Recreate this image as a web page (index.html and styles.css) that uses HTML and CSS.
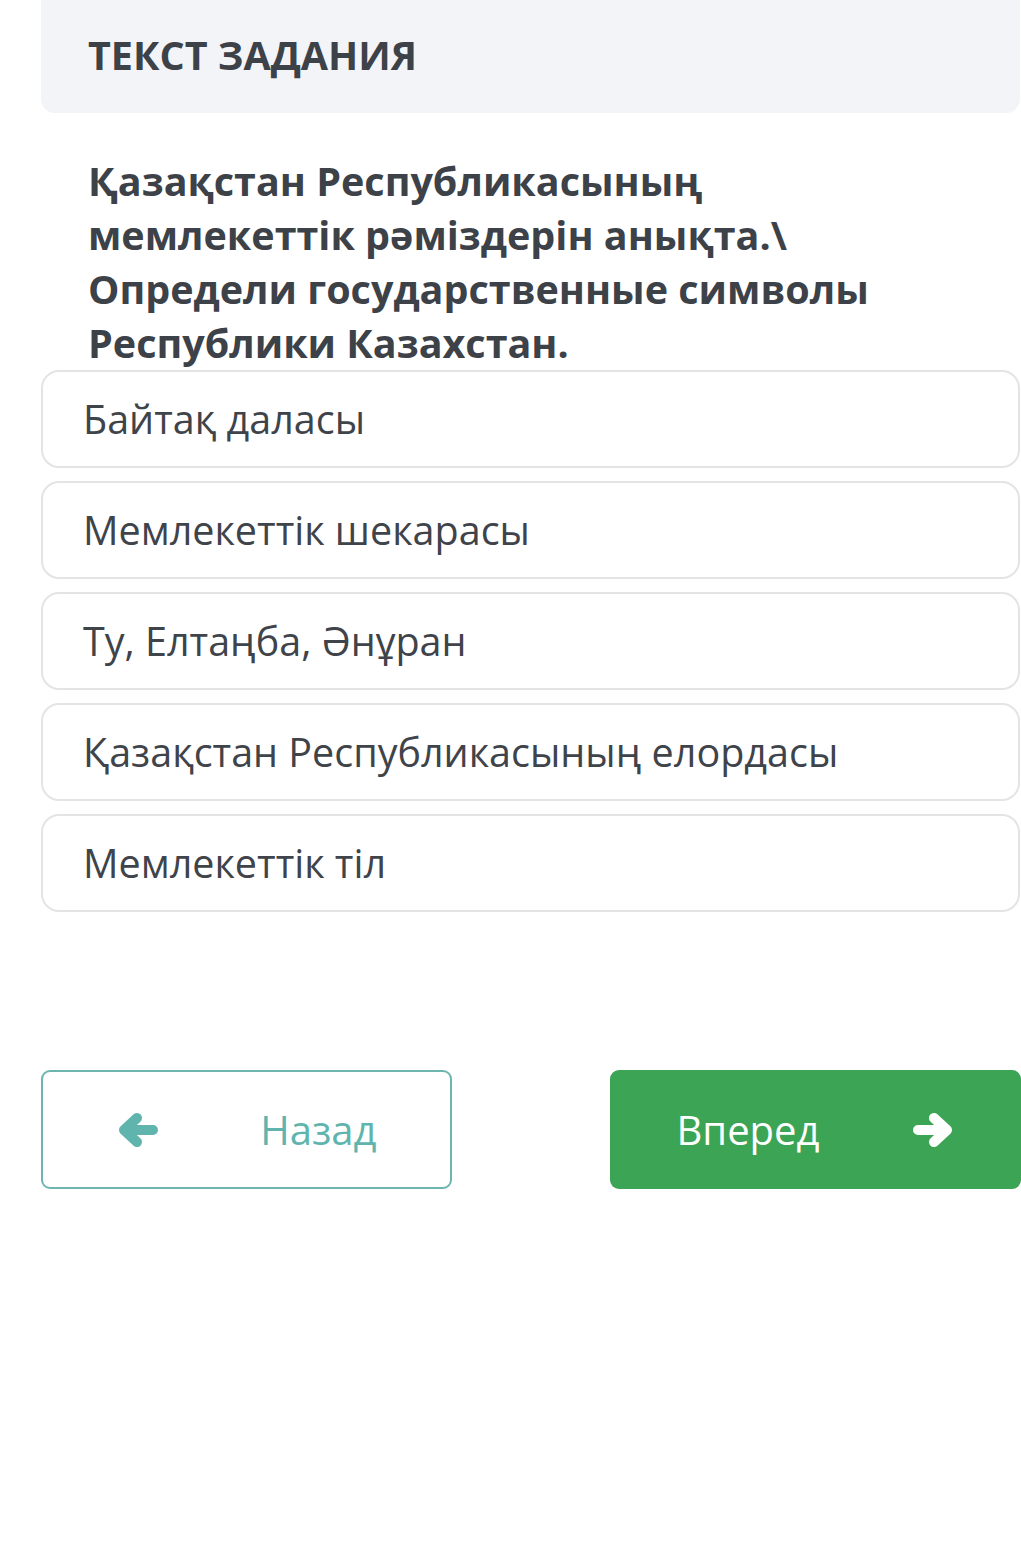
FILE: index.html
```html
<!DOCTYPE html>
<html lang="ru">
<head>
<meta charset="utf-8">
<link rel="stylesheet" href="styles.css">
</head>
<body>
<div class="page">
  <div class="header"><h1 class="header-title">ТЕКСТ ЗАДАНИЯ</h1></div>
  <p class="question">Қазақстан Республикасының мемлекеттік рәміздерін анықта.\ Определи государственные символы Республики Казахстан.</p>
  <div class="options">
    <div class="option">Байтақ даласы</div>
    <div class="option">Мемлекеттік шекарасы</div>
    <div class="option">Ту, Елтаңба, Әнұран</div>
    <div class="option">Қазақстан Республикасының елордасы</div>
    <div class="option">Мемлекеттік тіл</div>
  </div>
  <div class="nav">
    <button class="btn btn-back">
      <svg class="arrow" viewBox="0 0 40 34"><path d="M35 17H7M19 5L6 17L19 29"/></svg>
      <span>Назад</span>
    </button>
    <button class="btn btn-next">
      <span>Вперед</span>
      <svg class="arrow" viewBox="0 0 40 34"><path d="M5 17H33M21 5L34 17L21 29"/></svg>
    </button>
  </div>
</div>
</body>
</html>
```

FILE: styles.css
```css
* { box-sizing: border-box; }
html, body { margin: 0; padding: 0; background: #ffffff; }
body { font-family: "Open Sans", "Noto Sans", sans-serif; color: #3d4148; overflow: hidden; }
.page { padding-left: 41px; width: 1021px; }
.header {
  margin-top: -20px;
  height: 133px;
  width: 979px;
  background: #f3f4f7;
  border-radius: 14px;
  padding: 48px 0 0 47px;
}
.header-title {
  margin: 0;
  font-size: 39.5px;
  font-weight: 700;
  line-height: 54px;
  color: #3d4148;
}
.question {
  margin: 41px 0 0 47px;
  font-size: 39.5px;
  font-weight: 700;
  line-height: 54px;
  width: 810px;
  color: #3d4148;
}
.options { display: flex; flex-direction: column; gap: 13px; }
.option {
  height: 98px;
  width: 979px;
  border: 2px solid #e3e4e6;
  border-radius: 18px;
  display: flex;
  align-items: center;
  padding-left: 40px;
  font-size: 39.5px;
  color: #3f434a;
}
.nav {
  margin-top: 158px;
  display: flex;
  gap: 158px;
}
.btn {
  width: 411px;
  height: 119px;
  border-radius: 9px;
  display: flex;
  align-items: center;
  justify-content: space-between;
  font-family: "Open Sans", "Noto Sans", sans-serif;
  font-size: 40px;
  cursor: pointer;
}
.btn-back {
  background: #ffffff;
  border: 2px solid #6db6b0;
  color: #5fb5ae;
  padding: 0 73px 0 75px;
  stroke: #5fb5ae;
}
.btn-next {
  background: #3ca455;
  border: none;
  color: #ffffff;
  padding: 0 68px 0 67px;
  stroke: #ffffff;
  width: 412px;
}
.arrow {
  width: 40px;
  height: 34px;
  display: block;
  fill: none;
  stroke-width: 10;
  stroke-linecap: round;
  stroke-linejoin: round;
}
```
